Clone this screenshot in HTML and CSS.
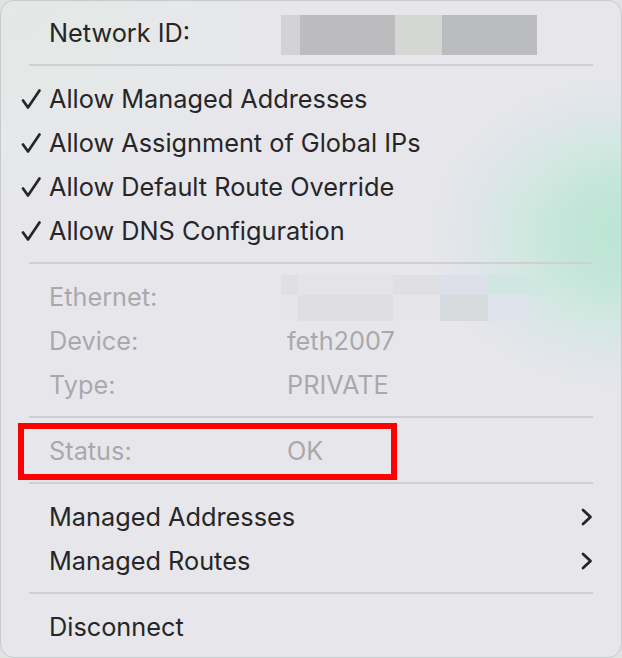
FILE: index.html
```html
<!DOCTYPE html>
<html lang="en">
<head>
<meta charset="utf-8">
<title>Network menu</title>
<link rel="stylesheet" href="styles.css">
</head>
<body>
<div class="menu">
  <div class="row">
    <span class="label dark">Network ID:</span>
    <span class="pix pix-id">
      <i class="b1"></i><i class="b2"></i><i class="b3"></i><i class="b4"></i>
    </span>
  </div>
  <div class="sep"></div>

  <div class="row check">
    <svg class="tick" viewBox="0 0 20 22" width="20" height="22"><path d="M2 12.5 L7 19.5 L18.5 2.5" fill="none" stroke="#262628" stroke-width="2.7" stroke-linecap="round" stroke-linejoin="round"/></svg>
    <span class="label dark">Allow Managed Addresses</span>
  </div>
  <div class="row check">
    <svg class="tick" viewBox="0 0 20 22" width="20" height="22"><path d="M2 12.5 L7 19.5 L18.5 2.5" fill="none" stroke="#262628" stroke-width="2.7" stroke-linecap="round" stroke-linejoin="round"/></svg>
    <span class="label dark">Allow Assignment of Global IPs</span>
  </div>
  <div class="row check">
    <svg class="tick" viewBox="0 0 20 22" width="20" height="22"><path d="M2 12.5 L7 19.5 L18.5 2.5" fill="none" stroke="#262628" stroke-width="2.7" stroke-linecap="round" stroke-linejoin="round"/></svg>
    <span class="label dark">Allow Default Route Override</span>
  </div>
  <div class="row check">
    <svg class="tick" viewBox="0 0 20 22" width="20" height="22"><path d="M2 12.5 L7 19.5 L18.5 2.5" fill="none" stroke="#262628" stroke-width="2.7" stroke-linecap="round" stroke-linejoin="round"/></svg>
    <span class="label dark">Allow DNS Configuration</span>
  </div>
  <div class="sep"></div>

  <div class="row">
    <span class="label dim">Ethernet:</span>
    <span class="pix pix-eth">
      <i class="e1"></i><i class="e2"></i><i class="e3"></i><i class="e4"></i><i class="e5"></i><i class="e6"></i><i class="e7"></i>
      <i class="f1"></i><i class="f2"></i><i class="f3"></i><i class="f4"></i><i class="f5"></i><i class="f6"></i><i class="f7"></i>
    </span>
  </div>
  <div class="row">
    <span class="label dim">Device:</span>
    <span class="value dim">feth2007</span>
  </div>
  <div class="row">
    <span class="label dim">Type:</span>
    <span class="value dim">PRIVATE</span>
  </div>
  <div class="sep"></div>

  <div class="row status">
    <span class="label dim">Status:</span>
    <span class="value dim">OK</span>
    <span class="highlight"></span>
  </div>
  <div class="sep"></div>

  <div class="row">
    <span class="label dark">Managed Addresses</span>
    <svg class="chev" viewBox="0 0 12 18" width="12" height="18"><path d="M2 2 L9.5 9 L2 16" fill="none" stroke="#262628" stroke-width="2.8" stroke-linecap="round" stroke-linejoin="round"/></svg>
  </div>
  <div class="row">
    <span class="label dark">Managed Routes</span>
    <svg class="chev" viewBox="0 0 12 18" width="12" height="18"><path d="M2 2 L9.5 9 L2 16" fill="none" stroke="#262628" stroke-width="2.8" stroke-linecap="round" stroke-linejoin="round"/></svg>
  </div>
  <div class="sep"></div>

  <div class="row">
    <span class="label dark">Disconnect</span>
  </div>
</div>
</body>
</html>
```
FILE: styles.css
```css
html, body {
  margin: 0;
  padding: 0;
  background: #dfe4e1;
}

.menu {
  box-sizing: border-box;
  width: 622px;
  height: 658px;
  padding: 10px 0 10px;
  border-radius: 14px;
  border: 1px solid #c9cacd;
  background:
    radial-gradient(ellipse 200px 160px at 625px 232px, #bce4d5 0%, #c2e6d9 30%, #d2e8e1 55%, #dfe5ea 78%, rgba(230,230,235,0) 100%),
    radial-gradient(ellipse 260px 200px at 0px 0px, #e3e9e5 0%, rgba(231,231,235,0) 100%),
    #e7e7eb;
  font-family: Inter, "Noto Sans", sans-serif;
  font-size: 25.3px;
  overflow: hidden;
}

.row {
  position: relative;
  display: flex;
  align-items: center;
  height: 44px;
  padding-left: 48px;
  padding-right: 28px;
}

.label {
  width: 238px;
  flex: none;
  white-space: nowrap;
  line-height: 1;
}

.row.check .label {
  width: auto;
}

.row.check {
  padding-left: 20px;
}

.tick {
  flex: none;
  margin-right: 8px;
}

.dark { color: #262628; }
.dim { color: #a9a9ad; }

.value {
  white-space: nowrap;
  line-height: 1;
}

.chev {
  flex: none;
  margin-left: auto;
}

.sep {
  height: 2px;
  margin: 9px 28px 11px;
  background: #d0d0d4;
}

/* pixelated (redacted) blocks */
.pix {
  display: flex;
  margin-left: -6px;
}
.pix-id {
  height: 40px;
  margin-top: 4px;
}
.pix-id i { display: block; height: 40px; }
.pix-id .b1 { width: 19px; background: #d2d3d5; }
.pix-id .b2 { width: 95px; background: #bcbcbe; }
.pix-id .b3 { width: 47px; background: #d5d7d5; }
.pix-id .b4 { width: 95px; background: #bbbcbf; }

.pix-eth {
  display: grid;
  grid-template-columns: 17px 48px 47px 47px 48px 39px 22px;
  grid-template-rows: 20px 26px;
  align-self: flex-start;
  margin-top: 0;
}
.pix-eth i { display: block; }
.e1 { background: #e0e0e4; }
.e2 { background: #e4e4e8; }
.e3 { background: #e4e4e8; }
.e4 { background: #e0e0e3; }
.e5 { background: #dde0e8; }
.e6 { background: #d0e6e0; }
.e7 { background: rgba(205,230,222,0.5); }
.f1 { background: #e6e6ea; }
.f2 { background: #dfdfe3; }
.f3 { background: #dfdfe3; }
.f4 { background: #e6e6ea; }
.f5 { background: #d7dbde; }
.f6 { background: #dfe3ec; }
.f7 { background: transparent; }

/* red annotation box */
.highlight {
  position: absolute;
  left: 17px;
  top: -6px;
  width: 379px;
  height: 57px;
  box-sizing: border-box;
  border: 6px solid #ff0000;
}
```
